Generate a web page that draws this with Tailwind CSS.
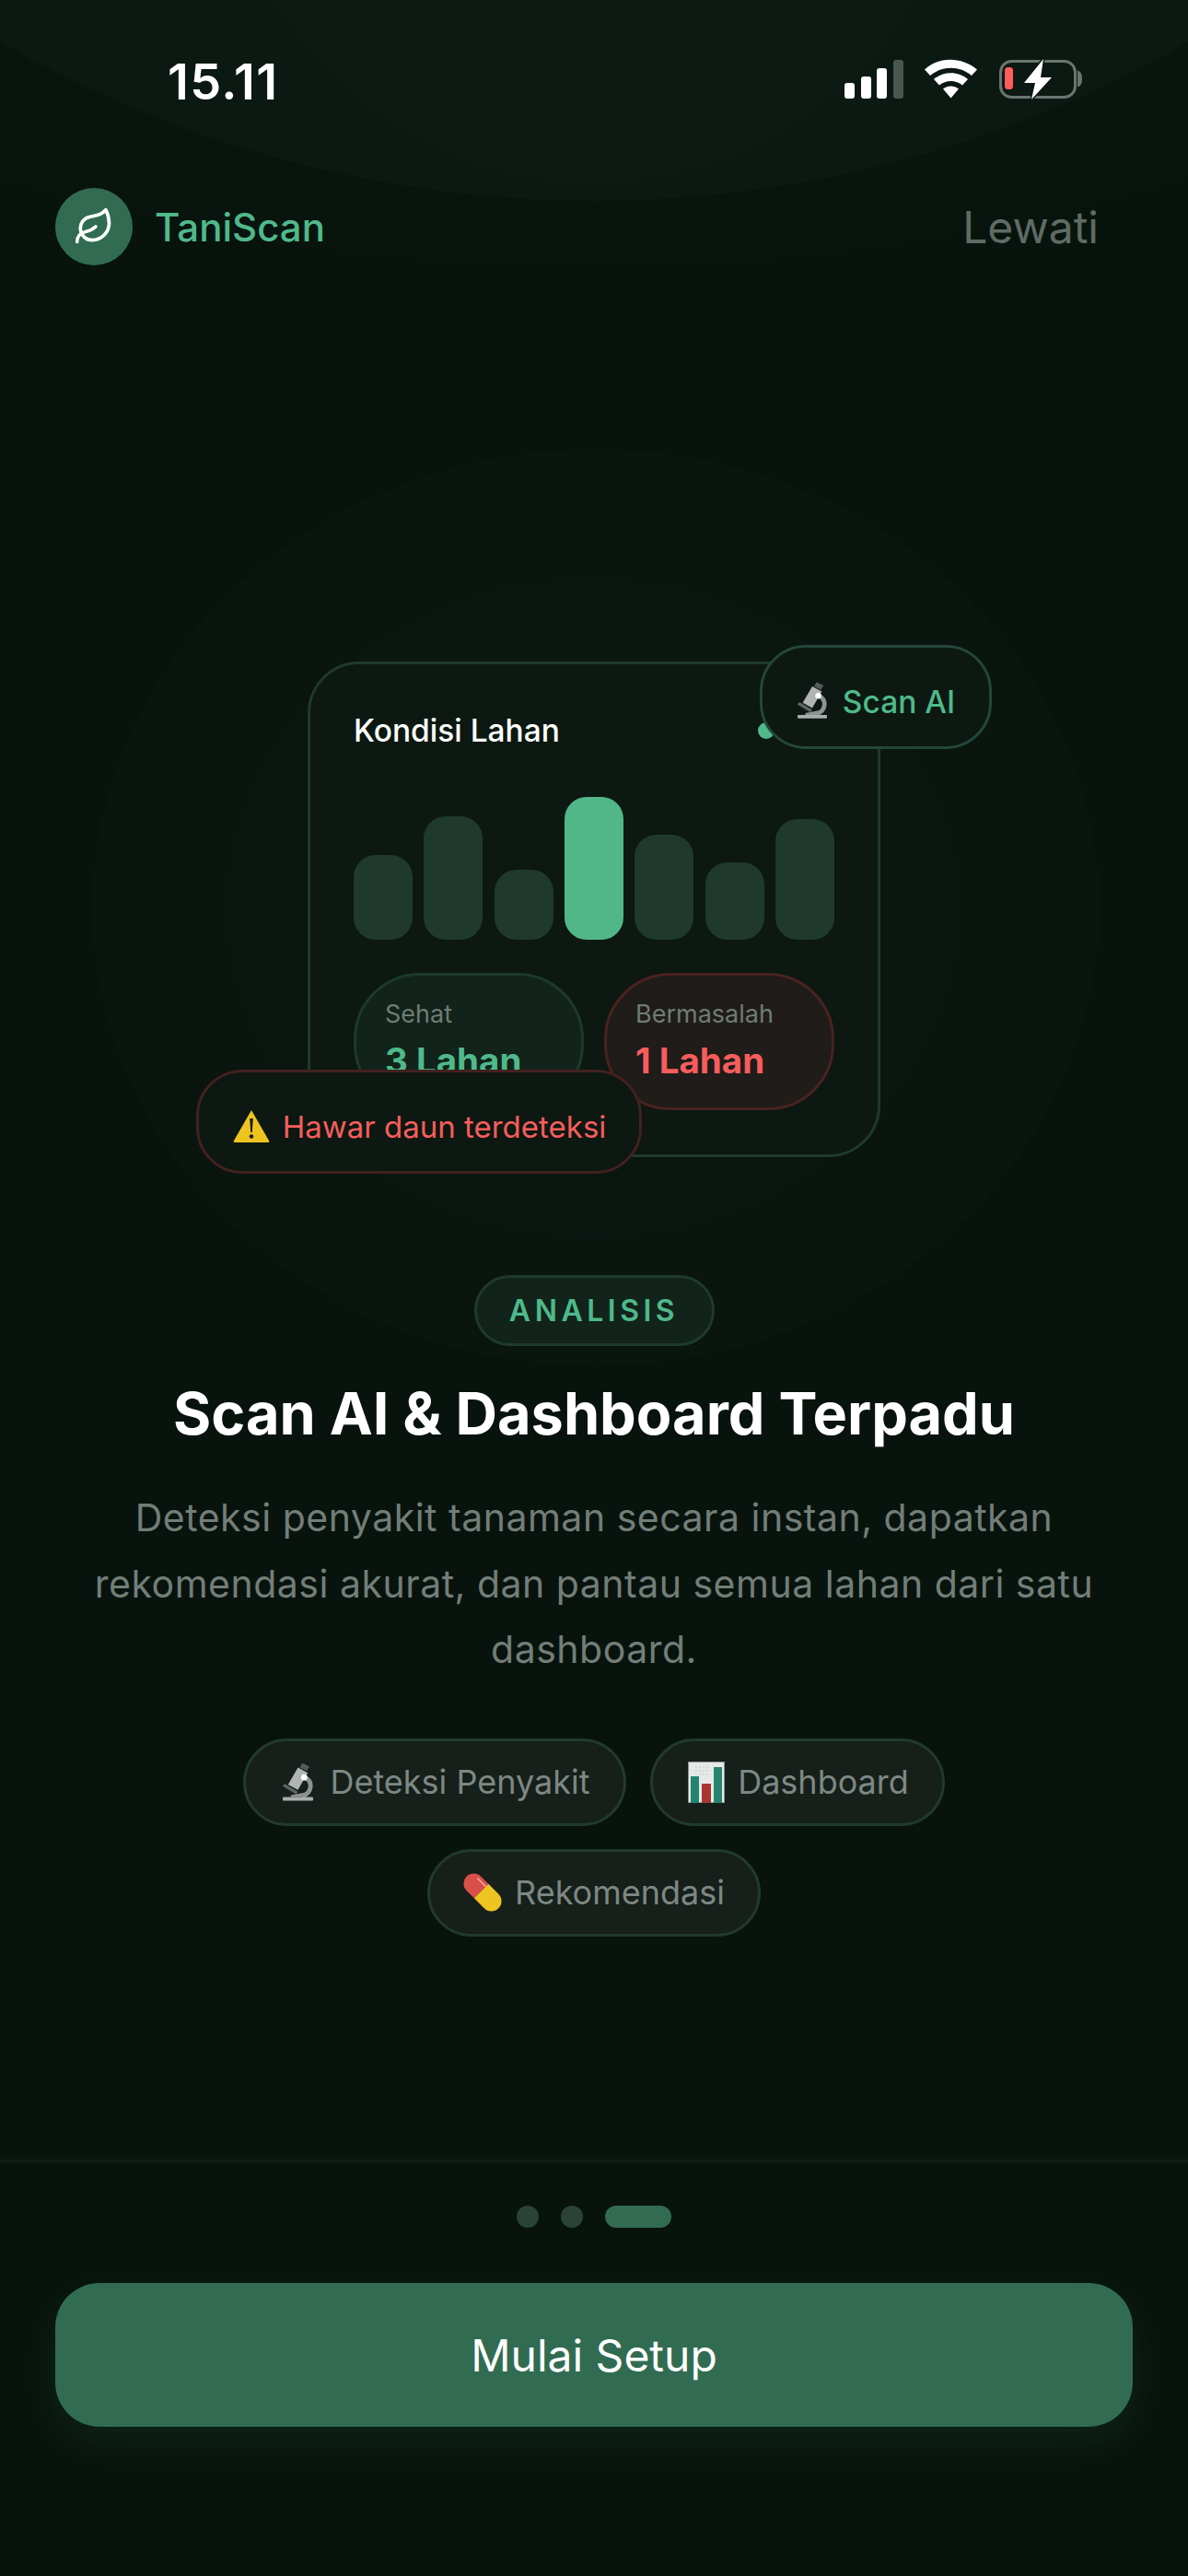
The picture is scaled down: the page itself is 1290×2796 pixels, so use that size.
<!DOCTYPE html>
<html lang="id">
<head>
<meta charset="UTF-8" />
<meta name="viewport" content="width=device-width, initial-scale=1" />
<title>TaniScan - Onboarding</title>
<script src="https://cdn.jsdelivr.net/npm/@tailwindcss/browser@4"></script>
</head>
<body class="bg-[#08130d] font-[Inter,sans-serif] text-white">

<div class="relative w-[1290px] h-[2796px] overflow-hidden flex flex-col">
  <!-- background glows -->
  <div class="absolute left-[-1592px] top-[-4184px] w-[4474px] h-[4474px] rounded-full bg-[#09140e]"></div>
  <div class="absolute left-[-645px] top-[-2360px] w-[2580px] h-[2578px] rounded-full bg-[#0c1912]"></div>
  <div class="absolute left-[239px] top-[-612px] w-[812px] h-[812px] rounded-full bg-[#0d1a13]"></div>
  <div class="absolute left-[100px] top-[487px] w-[1094px] h-[996px] rounded-[50%] bg-[#09150e]"></div>
  <div class="absolute left-[248px] top-[629px] w-[793px] h-[713px] rounded-[50%] bg-[#0a1610]"></div>

  <!-- status bar -->
  <div class="relative h-[174px] flex justify-between px-[109px] pt-[57px]">
    <div class="pl-[73px] text-[54px] leading-[64px] font-semibold tracking-[1.400px]">15.11</div>
    <svg width="262" height="46" viewBox="0 0 262 46" class="mt-[6px] mr-[2px]">
      <rect x="0" y="27" width="11" height="17" rx="3" fill="#fff"/>
      <rect x="18" y="20" width="11" height="24" rx="3" fill="#fff"/>
      <rect x="35" y="11" width="11" height="33" rx="3" fill="#fff"/>
      <rect x="53" y="2" width="11" height="42" rx="3" fill="#4a5650"/>
      <path d="M87 12.500 C102 -2 127 -2 144 12.500 L138 19 C125 8 106 8 93 19 Z" fill="#fff"/>
      <path d="M97 23 C107 14 124 14 134 23 L128 29.500 C121 23.500 110 23.500 103 29.500 Z" fill="#fff"/>
      <path d="M107 33.500 C112 29.500 119 29.500 124 33.500 L115.500 43.500 Z" fill="#fff"/>
      <rect x="169.500" y="3.500" width="81" height="39" rx="12" fill="none" stroke="#6a7570" stroke-width="3"/>
      <path d="M254 15 C258 17 258 28 254 30 Z" fill="#6a7570" stroke="#6a7570" stroke-width="2"/>
      <rect x="174" y="10" width="9" height="24" rx="3.500" fill="#ff5c5c"/>
      <path d="M216 1 L195 27 L207 27 L203 45 L225 21 L213 21 Z" fill="#fff" stroke="#0c1912" stroke-width="3" paint-order="stroke"/>
    </svg>
  </div>

  <!-- nav -->
  <div class="relative flex items-center justify-between pl-[60px] pr-[97px] mt-[30px] h-[84px]">
    <div class="flex items-center gap-[24px]">
      <div class="w-[84px] h-[84px] rounded-full bg-[#316c52] flex items-center justify-center">
        <svg width="44" height="44" viewBox="0 0 24 24" fill="none" stroke="#fff" stroke-width="2" stroke-linecap="round" stroke-linejoin="round">
          <path d="M11 20A7 7 0 0 1 9.800 6.100C15.500 5 17 4.480 19 2c1 2 2 4.180 2 8 0 5.500-4.780 10-10 10Z"/>
          <path d="M2 21c0-3 1.850-5.360 5.080-6C9.500 14.520 12 13 13 12"/>
        </svg>
      </div>
      <span class="text-[42px] font-[550] text-[#4fb98a]">TaniScan</span>
    </div>
    <span class="text-[48px] text-[#5f6b65] pt-[2px]">Lewati</span>
  </div>

  <!-- illustration -->
  <div class="relative ml-[213px] mt-[412px] w-[864px] h-[574px]">
    <div class="ml-[121px] mt-[18px] w-[622px] h-[538px] absolute rounded-[56px] border-[3px] border-[#1f3a2d] bg-[#0c1811] pl-[47px] pr-[47px] pt-[49px]">
      <div class="flex items-center justify-between h-[46px]">
        <span class="text-[33.500px] font-[550]">Kondisi Lahan</span>
        <span class="w-[18px] h-[18px] rounded-full bg-[#4fb98a] mr-[65px]"></span>
      </div>
      <div class="flex items-end justify-between h-[155px] mt-[49px]">
        <div class="w-[64px] h-[92px] rounded-[24px] bg-[#1f3a2d]"></div>
        <div class="w-[64px] h-[134px] rounded-[24px] bg-[#1f3a2d]"></div>
        <div class="w-[64px] h-[76px] rounded-[24px] bg-[#1f3a2d]"></div>
        <div class="w-[64px] h-[155px] rounded-[24px] bg-[#52b788]"></div>
        <div class="w-[64px] h-[114px] rounded-[24px] bg-[#1f3a2d]"></div>
        <div class="w-[64px] h-[84px] rounded-[24px] bg-[#1f3a2d]"></div>
        <div class="w-[64px] h-[131px] rounded-[24px] bg-[#1f3a2d]"></div>
      </div>
      <div class="flex justify-between mt-[36px]">
        <div class="w-[250px] h-[149px] rounded-[72px] border-[3px] border-[#1d3a2c] bg-[#11231a] pl-[31px] pt-[24px]">
          <div class="text-[27px] leading-[36px] text-[#6f7c75]">Sehat</div>
          <div class="text-[38.500px] leading-[50px] mt-[7px] font-bold text-[#4fb98a]">3 Lahan</div>
        </div>
        <div class="w-[250px] h-[149px] rounded-[72px] border-[3px] border-[#4a2220] bg-[#1f1c19] pl-[31px] pt-[24px]">
          <div class="text-[27px] leading-[36px] text-[#6f7c75]">Bermasalah</div>
          <div class="text-[38.500px] leading-[50px] mt-[7px] font-bold text-[#f75d5d]">1 Lahan</div>
        </div>
      </div>
    </div>

    <div class="absolute right-0 top-0 w-[252px] h-[113px] rounded-[50px] border-[3px] border-[#24473a] bg-[#0c1811] flex items-center justify-center gap-[17px] pt-[11px] pl-[1px]">
      <svg width="32" height="42" viewBox="0 0 34 44" class="mt-[-5px]">
        <path d="M22 1 L30 5 L27 10 L19 6 Z" fill="#55595a"/>
        <path d="M17 6 L28 12 L17 31 L6 25 Z" fill="#b0b4b2"/>
        <path d="M2 24 L17 33 L15 36 L0 27 Z" fill="#5f6462"/>
        <path d="M25 17 C34 22 33 34 22 38" fill="none" stroke="#8e9391" stroke-width="5"/>
        <circle cx="24" cy="17" r="3.500" fill="#fff"/>
        <path d="M9 37 L24 34 L26 39 L9 39 Z" fill="#8e9391"/>
        <rect x="0" y="39" width="34" height="4" rx="1" fill="#a9adab"/>
      </svg>
      <span class="text-[33.500px] font-[550] text-[#4fb98a]">Scan AI</span>
    </div>

    <div class="absolute left-0 bottom-0 w-[484px] h-[113px] rounded-[50px] border-[3px] border-[#43211f] bg-[#0c1811] flex items-center justify-center gap-[13px] pt-[12px]">
      <svg width="42" height="38" viewBox="0 0 42 38" class="mt-[-4px]">
        <path d="M21 2 L40 35 Q41 37 39 37 L3 37 Q1 37 2 35 Z" fill="#eec421"/>
        <path d="M19.200 11 L22.800 11 L21.800 26 L20.200 26 Z" fill="#1a1a1a"/>
        <circle cx="21" cy="30.500" r="2.300" fill="#1a1a1a"/>
      </svg>
      <span class="text-[33px] text-[#f75d5d]">Hawar daun terdeteksi</span>
    </div>
  </div>

  <!-- copy -->
  <div class="relative flex flex-col items-center mt-[110px]">
    <div class="w-[261px] h-[77px] rounded-full border-[3px] border-[#1f3a2d] bg-[#11231a] flex items-center justify-center text-[32px] font-semibold tracking-[4.500px] text-[#4fb98a]">ANALISIS</div>
    <h1 class="mt-[35px] text-[63px] leading-[76px] font-bold">Scan AI &amp; Dashboard Terpadu</h1>
    <p class="mt-[40px] w-[1130px] text-center text-[41px] leading-[71.500px] text-[#727e78] tracking-[0.500px]">Deteksi penyakit tanaman secara instan, dapatkan rekomendasi akurat, dan pantau semua lahan dari satu dashboard.</p>
    <div class="mt-[60px] flex flex-wrap justify-center gap-x-[26px] gap-y-[25px] w-[900px]">
      <div class="h-[95px] w-[416px] rounded-full border-[3px] border-[#213a2d] bg-[#161f1a] flex items-center justify-center gap-[18px] pl-[4px]">
        <svg width="33" height="44" viewBox="0 0 34 44">
          <path d="M22 1 L30 5 L27 10 L19 6 Z" fill="#55595a"/>
          <path d="M17 6 L28 12 L17 31 L6 25 Z" fill="#b0b4b2"/>
          <path d="M2 24 L17 33 L15 36 L0 27 Z" fill="#5f6462"/>
          <path d="M25 17 C34 22 33 34 22 38" fill="none" stroke="#8e9391" stroke-width="5"/>
          <circle cx="24" cy="17" r="3.500" fill="#fff"/>
          <path d="M9 37 L24 34 L26 39 L9 39 Z" fill="#8e9391"/>
          <rect x="0" y="39" width="34" height="4" rx="1" fill="#a9adab"/>
        </svg>
        <span class="text-[36px] text-[#7d8883]">Deteksi Penyakit</span>
      </div>
      <div class="h-[95px] w-[320px] rounded-full border-[3px] border-[#213a2d] bg-[#161f1a] flex items-center justify-center gap-[14px] pl-[2px]">
        <svg width="40" height="45" viewBox="0 0 40 45">
          <rect x="0.500" y="0.500" width="39" height="44" fill="#e6e9e8" stroke="#8a8f8d"/>
          <path d="M8 6 H24 M8 10 H24 M8 14 H24" stroke="#c3c8c6" stroke-dasharray="2 2"/>
          <rect x="3" y="16" width="9" height="29" fill="#24846f"/>
          <rect x="15" y="24" width="10" height="21" fill="#a7362f"/>
          <rect x="28" y="6" width="9" height="39" fill="#24846f"/>
        </svg>
        <span class="text-[36px] text-[#7d8883]">Dashboard</span>
      </div>
      <div class="h-[95px] w-[362px] rounded-full border-[3px] border-[#213a2d] bg-[#161f1a] flex items-center justify-center gap-[14px]">
        <svg width="42" height="42" viewBox="0 0 42 42">
          <g transform="rotate(45 21 21)">
            <path d="M19 10 L7.500 10 A11 11 0 0 0 7.500 32 L19 32 Z" fill="#d94f4a"/>
            <path d="M19 10 L34.500 10 A11 11 0 0 1 34.500 32 L19 32 Z" fill="#eec421"/>
            <path d="M6 14 L19 14" stroke="#f3a9a4" stroke-width="1.500"/>
          </g>
        </svg>
        <span class="text-[36px] text-[#7d8883]">Rekomendasi</span>
      </div>
    </div>
  </div>

  <!-- footer -->
  <div class="absolute left-0 right-0 top-[2344px] border-t-[3px] border-[#101c16] px-[60px] pt-[47px]">
    <div class="flex items-center justify-center gap-[24px]">
      <span class="w-[24px] h-[24px] rounded-full bg-[#2b4337]"></span>
      <span class="w-[24px] h-[24px] rounded-full bg-[#2b4337]"></span>
      <span class="w-[72px] h-[24px] rounded-full bg-[#316c52]"></span>
    </div>
    <button class="mt-[60px] w-full h-[156px] rounded-[48px] bg-[#316c52] text-[48px] font-normal pt-[2px] shadow-[0_16px_48px_rgba(45,106,79,0.2)]">Mulai Setup</button>
  </div>
</div>

</body>
</html>
